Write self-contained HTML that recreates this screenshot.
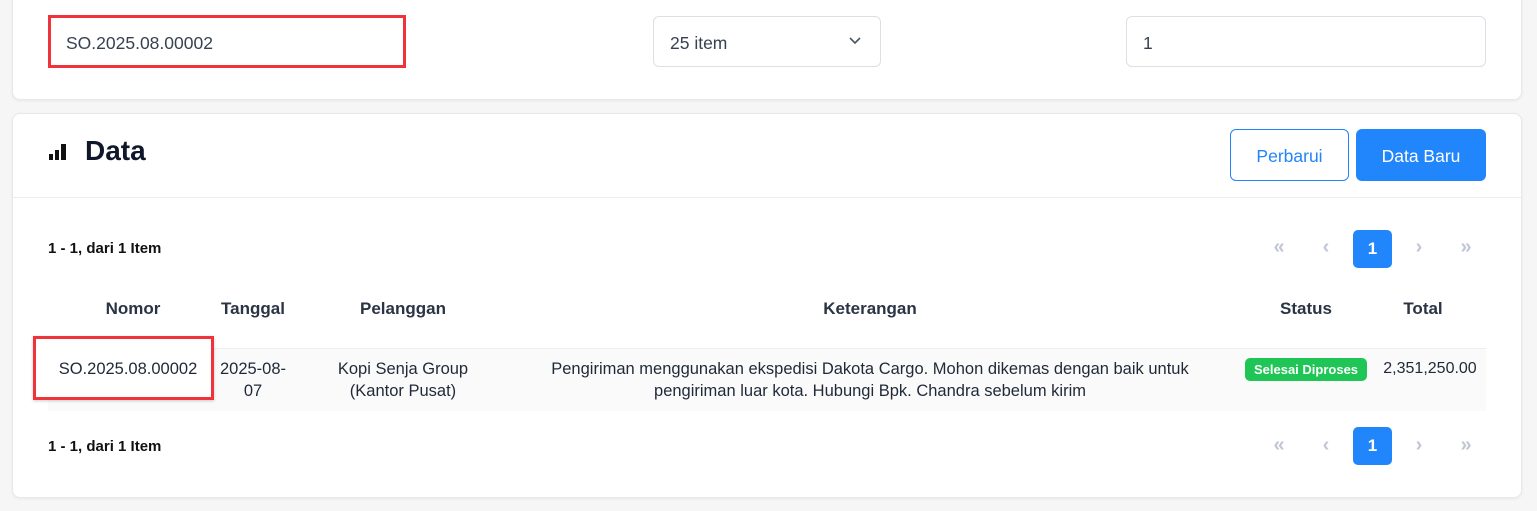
<!DOCTYPE html>
<html><head><meta charset="utf-8"><style>
*{box-sizing:border-box;margin:0;padding:0}
body{width:1537px;height:511px;background:#f6f6f7;font-family:"Liberation Sans",sans-serif;color:#1f2937;position:relative;overflow:hidden}
.abs{position:absolute}
.card{position:absolute;background:#fff;border:1px solid #e8e8ea;border-radius:8px;box-shadow:0 1px 3px rgba(0,0,0,.06)}
.inp{position:absolute;border:1px solid #dcdfe6;border-radius:6px;background:#fff;font-size:17.5px;color:#374151;padding-left:16px;padding-top:3px;display:flex;align-items:center}
.pg{position:absolute;font-size:20px;color:#c0c6d4;text-align:center;width:20px;font-weight:bold}
.one{position:absolute;width:39px;height:38px;background:#2185fb;border-radius:5px;color:#fff;font-weight:bold;font-size:17px;display:flex;align-items:center;justify-content:center}
.th{position:absolute;font-weight:bold;font-size:17px;color:#2a3444;text-align:center}
.td{position:absolute;font-size:16.5px;color:#1f2937;text-align:center;line-height:22px}
</style></head><body>
<div class="card" style="left:12px;top:-10px;width:1510px;height:110px"></div>
<div class="inp" style="left:48px;top:15px;width:358px;height:53px;border:3px solid #f0333a;border-radius:0;padding-left:15px">SO.2025.08.00002</div>
<div class="inp" style="left:653px;top:16px;width:228px;height:51px">25 item
<svg class="abs" style="left:194px;top:19px" width="14" height="10" viewBox="0 0 14 10"><path d="M2 2l5 5 5-5" stroke="#4b5563" stroke-width="1.6" fill="none"/></svg></div>
<div class="inp" style="left:1126px;top:16px;width:360px;height:51px">1</div>

<div class="card" style="left:12px;top:113px;width:1510px;height:385px"></div>
<div class="abs" style="left:13px;top:197px;width:1508px;border-top:1px solid #ececee"></div>
<svg class="abs" style="left:49px;top:143px" width="20" height="18"><rect x="0" y="11" width="4" height="6" fill="#111"/><rect x="6" y="7" width="4" height="10" fill="#111"/><rect x="12" y="1" width="5" height="16" fill="#111"/></svg>
<div class="abs" style="left:85px;top:135px;font-size:28px;font-weight:bold;color:#0f172a">Data</div>
<div class="abs" style="left:1230px;top:129px;width:119px;height:52px;border:1px solid #2185fb;border-radius:6px;color:#2185fb;font-size:17.5px;padding-top:2px;display:flex;align-items:center;justify-content:center">Perbarui</div>
<div class="abs" style="left:1356px;top:129px;width:130px;height:52px;background:#2185fb;border-radius:6px;color:#fff;font-size:17.5px;padding-top:2px;display:flex;align-items:center;justify-content:center">Data Baru</div>

<div class="abs" style="left:48px;top:240px;font-size:15px;font-weight:bold;color:#111">1 - 1, dari 1 Item</div>
<div class="pg" style="left:1269px;top:236px">«</div><div class="pg" style="left:1316px;top:236px">‹</div>
<div class="one" style="left:1353px;top:230px">1</div>
<div class="pg" style="left:1409px;top:236px">›</div><div class="pg" style="left:1456px;top:236px">»</div>

<div class="th" style="left:48px;width:170px;top:299px">Nomor</div>
<div class="th" style="left:213px;width:80px;top:299px">Tanggal</div>
<div class="th" style="left:318px;width:170px;top:299px">Pelanggan</div>
<div class="th" style="left:500px;width:740px;top:299px">Keterangan</div>
<div class="th" style="left:1245px;width:122px;top:299px">Status</div>
<div class="th" style="left:1375px;width:96px;top:299px">Total</div>

<div class="abs" style="left:48px;top:348px;width:1438px;height:63px;background:#fafafa;border-top:1px solid #eeeeef"></div>
<div class="abs" style="left:33px;top:336px;width:181px;height:64px;border:3px solid #f0333a;background:#fff;box-shadow:0 1px 3px rgba(0,0,0,.2)"></div>
<div class="td" style="left:48px;width:160px;top:358px">SO.2025.08.00002</div>
<div class="td" style="left:208px;width:90px;top:358px">2025-08-<br>07</div>
<div class="td" style="left:303px;width:200px;top:358px">Kopi Senja Group<br>(Kantor Pusat)</div>
<div class="td" style="left:470px;width:800px;top:358px">Pengiriman menggunakan ekspedisi Dakota Cargo. Mohon dikemas dengan baik untuk<br>pengiriman luar kota. Hubungi Bpk. Chandra sebelum kirim</div>
<div class="abs" style="left:1245px;top:358px;width:122px;height:23px;background:#1fc655;border-radius:5px;color:#fff;font-size:13px;font-weight:bold;display:flex;align-items:center;justify-content:center">Selesai Diproses</div>
<div class="td" style="left:1375px;width:110px;top:358px;font-size:16px">2,351,250.00</div>

<div class="abs" style="left:48px;top:438px;font-size:15px;font-weight:bold;color:#111">1 - 1, dari 1 Item</div>
<div class="pg" style="left:1269px;top:434px">«</div><div class="pg" style="left:1316px;top:434px">‹</div>
<div class="one" style="left:1353px;top:427px">1</div>
<div class="pg" style="left:1409px;top:434px">›</div><div class="pg" style="left:1456px;top:434px">»</div>
</body></html>
